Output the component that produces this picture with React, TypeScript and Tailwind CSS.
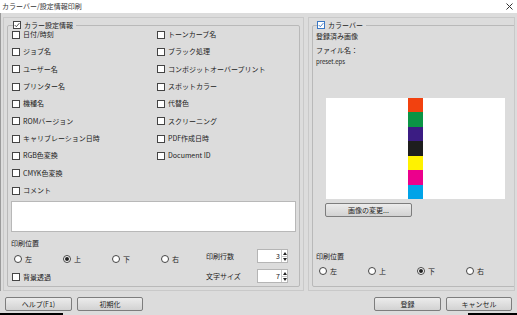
import React from 'react';

const font = { fontFamily: '"Noto Sans CJK JP", "Noto Sans", sans-serif' };

function Box({ checked, blue }: { checked?: boolean; blue?: boolean }) {
  return (
    <span
      className={`flex h-[8px] w-[8px] shrink-0 items-center justify-center border ${
        blue ? 'border-[#3b78c4] bg-white' : 'border-[#444] bg-white'
      }`}
    >
      {checked ? (
        <svg width="7" height="6" viewBox="0 0 7 6">
          <path d="M0.8 3 L2.7 5 L6.3 0.8" fill="none" stroke={blue ? '#2f6fc0' : '#333'} strokeWidth="1" />
        </svg>
      ) : null}
    </span>
  );
}

function Check({ label, checked }: { label: string; checked?: boolean }) {
  return (
    <div className="flex h-[17.33px] items-center gap-[3px] text-[7px] leading-none text-[#222]">
      <Box checked={checked} />
      <span>{label}</span>
    </div>
  );
}

function Radio({ label, on }: { label: string; on?: boolean }) {
  return (
    <div className="flex w-[49px] items-center gap-[3px] text-[7px] leading-none text-[#222]">
      <span className="flex h-[8px] w-[8px] items-center justify-center rounded-full border border-[#444] bg-white">
        {on ? <span className="h-[4px] w-[4px] rounded-full bg-[#222]" /> : null}
      </span>
      <span>{label}</span>
    </div>
  );
}

function Btn({ label, w }: { label: string; w: string }) {
  return (
    <div
      className={`${w} flex h-[14px] items-center justify-center rounded-[2px] border border-[#7d7d7d] bg-gradient-to-b from-[#ececec] to-[#d2d2d2] text-[7px] leading-none text-[#222]`}
    >
      {label}
    </div>
  );
}

function Spin({ value }: { value: string }) {
  return (
    <div className="flex h-[14px] w-[31px] border border-[#b5b5b5] bg-white">
      <div className="flex flex-1 items-center justify-end pr-[1px] text-[7px] leading-none text-[#222]">{value}</div>
      <div className="flex w-[6px] flex-col border-l border-[#c8c8c8]">
        <div className="flex flex-1 items-center justify-center border-b border-[#c8c8c8]">
          <svg width="4" height="3" viewBox="0 0 4 3"><path d="M0 3 L2 0 L4 3Z" fill="#222" /></svg>
        </div>
        <div className="flex flex-1 items-center justify-center">
          <svg width="4" height="3" viewBox="0 0 4 3"><path d="M0 0 L2 3 L4 0Z" fill="#222" /></svg>
        </div>
      </div>
    </div>
  );
}

const leftCol = [
  '日付/時刻',
  'ジョブ名',
  'ユーザー名',
  'プリンター名',
  '機種名',
  'ROMバージョン',
  'キャリブレーション日時',
  'RGB色変換',
  'CMYK色変換',
  'コメント',
];

const rightCol = [
  'トーンカーブ名',
  'ブラック処理',
  'コンポジットオーバープリント',
  'スポットカラー',
  '代替色',
  'スクリーニング',
  'PDF作成日時',
  'Document ID',
];

const stripes = ['#f2410f', '#0b9445', '#3b1c83', '#1e1e1e', '#fff200', '#ec008c', '#00a3e8'];

export default function App() {
  return (
    <div className="flex h-[315px] w-[517px] flex-col overflow-hidden bg-[#dcdcdc]" style={font}>
      <div className="flex h-[13px] shrink-0 items-center justify-between bg-white pl-[2px] pr-[4px] text-[7px] leading-none text-[#333]">
        <span>カラーバー/設定情報印刷</span>
        <svg width="7" height="7" viewBox="0 0 7 7">
          <path d="M0.5 0.5 L6.5 6.5 M6.5 0.5 L0.5 6.5" stroke="#333" strokeWidth="1" />
        </svg>
      </div>

      <div className="flex h-[278px] shrink-0 gap-[4px] border-l border-[#9a9a9a] px-[2px] pt-[4px]">
        {/* left panel */}
        <div className="flex h-[274px] w-[301px] overflow-hidden border border-[#c9c9c9] p-[3px]">
          <fieldset className="flex min-h-0 flex-1 flex-col rounded-[2px] border border-[#b9b9b9] px-[3px] pb-[2px]">
            <legend className="ml-[2px] flex items-center gap-[3px] pr-[3px] text-[7px] leading-none text-[#222]">
              <Box checked />
              <span>カラー設定情報</span>
            </legend>
            <div className="mt-[-3px] flex shrink-0 pl-[1px]">
              <div className="w-[145px]">
                {leftCol.map((l) => (
                  <Check key={l} label={l} />
                ))}
              </div>
              <div>
                {rightCol.map((l) => (
                  <Check key={l} label={l} />
                ))}
              </div>
            </div>
            <div className="mt-[2px] h-[31px] shrink-0 border border-[#b8b8b8] bg-white" />
            <div className="mt-[8px] text-[7px] leading-none text-[#222]">印刷位置</div>
            <div className="mt-[2px] flex">
              <div className="flex flex-col">
                <div className="mt-[6px] flex pl-[3px]">
                  <Radio label="左" />
                  <Radio label="上" on />
                  <Radio label="下" />
                  <Radio label="右" />
                </div>
                <div className="mt-[10px] flex items-center gap-[3px] pl-[1px] text-[7px] leading-none text-[#222]">
                  <Box />
                  <span>背景透過</span>
                </div>
              </div>
              <div className="ml-[-4px] flex flex-col gap-[6px]">
                <div className="flex items-center">
                  <span className="w-[51px] text-[7px] leading-none text-[#222]">印刷行数</span>
                  <Spin value="3" />
                </div>
                <div className="flex items-center">
                  <span className="w-[51px] text-[7px] leading-none text-[#222]">文字サイズ</span>
                  <Spin value="7" />
                </div>
              </div>
            </div>
          </fieldset>
        </div>

        {/* right panel */}
        <div className="flex h-[274px] w-[207px] overflow-hidden border border-[#c9c9c9] p-[3px]">
          <fieldset className="flex min-h-0 flex-1 flex-col rounded-[2px] border border-[#b9b9b9] px-[3px]">
            <legend className="ml-[1px] flex items-center gap-[3px] pr-[3px] text-[7px] leading-none text-[#222]">
              <Box checked blue />
              <span>カラーバー</span>
            </legend>
            <div className="mt-[4px] text-[7px] leading-none text-[#222]">登録済み画像</div>
            <div className="mt-[7px] text-[7px] leading-none text-[#222]">ファイル名：</div>
            <div className="mt-[5px] text-[6px] leading-none text-[#222]">preset.eps</div>
            <div className="ml-[10px] mt-[33px] flex h-[101px] w-[179px] shrink-0 justify-center bg-white">
              <div className="flex w-[15px] flex-col">
                {stripes.map((c) => (
                  <div key={c} className="flex-1" style={{ background: c }} />
                ))}
              </div>
            </div>
            <div className="ml-[9px] mt-[4px]">
              <Btn label="画像の変更..." w="w-[87px]" />
            </div>
            <div className="mt-[36px] text-[7px] leading-none text-[#222]">印刷位置</div>
            <div className="mt-[7px] flex pl-[3px]">
              <Radio label="左" />
              <Radio label="上" />
              <Radio label="下" on />
              <Radio label="右" />
            </div>
          </fieldset>
        </div>
      </div>

      <div className="flex shrink-0 items-center justify-between px-[5px] pt-[6px]">
        <div className="flex gap-[5px]">
          <Btn label="ヘルプ(F1)" w="w-[67px]" />
          <Btn label="初期化" w="w-[66px]" />
        </div>
        <div className="flex gap-[5px]">
          <Btn label="登録" w="w-[67px]" />
          <Btn label="キャンセル" w="w-[66px]" />
        </div>
      </div>
      <div className="mt-auto flex h-[2px] shrink-0 justify-between">
        <div className="w-[63px] bg-black" />
        <div className="w-[49px] bg-black" />
      </div>
    </div>
  );
}
